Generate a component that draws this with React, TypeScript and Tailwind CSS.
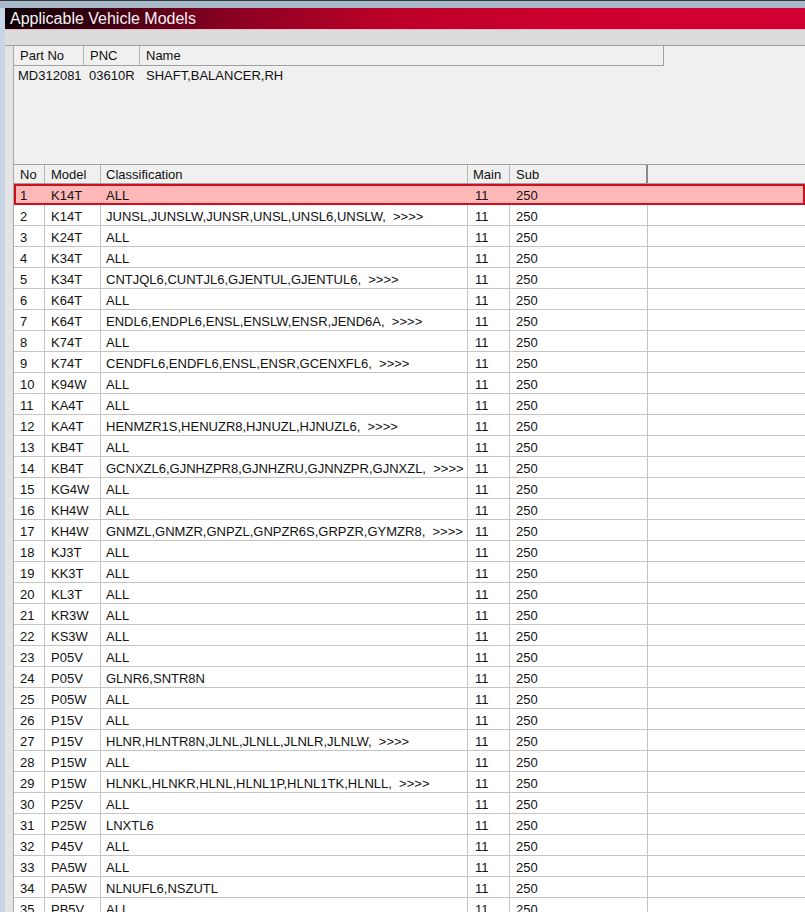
import React from "react";

type Row = { no: number; model: string; cls: string };

const rows: Row[] = [
  { no: 1, model: "K14T", cls: "ALL" },
  { no: 2, model: "K14T", cls: "JUNSL,JUNSLW,JUNSR,UNSL,UNSL6,UNSLW,  >>>>" },
  { no: 3, model: "K24T", cls: "ALL" },
  { no: 4, model: "K34T", cls: "ALL" },
  { no: 5, model: "K34T", cls: "CNTJQL6,CUNTJL6,GJENTUL,GJENTUL6,  >>>>" },
  { no: 6, model: "K64T", cls: "ALL" },
  { no: 7, model: "K64T", cls: "ENDL6,ENDPL6,ENSL,ENSLW,ENSR,JEND6A,  >>>>" },
  { no: 8, model: "K74T", cls: "ALL" },
  { no: 9, model: "K74T", cls: "CENDFL6,ENDFL6,ENSL,ENSR,GCENXFL6,  >>>>" },
  { no: 10, model: "K94W", cls: "ALL" },
  { no: 11, model: "KA4T", cls: "ALL" },
  { no: 12, model: "KA4T", cls: "HENMZR1S,HENUZR8,HJNUZL,HJNUZL6,  >>>>" },
  { no: 13, model: "KB4T", cls: "ALL" },
  { no: 14, model: "KB4T", cls: "GCNXZL6,GJNHZPR8,GJNHZRU,GJNNZPR,GJNXZL,  >>>>" },
  { no: 15, model: "KG4W", cls: "ALL" },
  { no: 16, model: "KH4W", cls: "ALL" },
  { no: 17, model: "KH4W", cls: "GNMZL,GNMZR,GNPZL,GNPZR6S,GRPZR,GYMZR8,  >>>>" },
  { no: 18, model: "KJ3T", cls: "ALL" },
  { no: 19, model: "KK3T", cls: "ALL" },
  { no: 20, model: "KL3T", cls: "ALL" },
  { no: 21, model: "KR3W", cls: "ALL" },
  { no: 22, model: "KS3W", cls: "ALL" },
  { no: 23, model: "P05V", cls: "ALL" },
  { no: 24, model: "P05V", cls: "GLNR6,SNTR8N" },
  { no: 25, model: "P05W", cls: "ALL" },
  { no: 26, model: "P15V", cls: "ALL" },
  { no: 27, model: "P15V", cls: "HLNR,HLNTR8N,JLNL,JLNLL,JLNLR,JLNLW,  >>>>" },
  { no: 28, model: "P15W", cls: "ALL" },
  { no: 29, model: "P15W", cls: "HLNKL,HLNKR,HLNL,HLNL1P,HLNL1TK,HLNLL,  >>>>" },
  { no: 30, model: "P25V", cls: "ALL" },
  { no: 31, model: "P25W", cls: "LNXTL6" },
  { no: 32, model: "P45V", cls: "ALL" },
  { no: 33, model: "PA5W", cls: "ALL" },
  { no: 34, model: "PA5W", cls: "NLNUFL6,NSZUTL" },
  { no: 35, model: "PB5V", cls: "ALL" },
];

const HeadCell = ({ w, pl, children }: { w: string; pl: string; children?: React.ReactNode }) => (
  <div className={`${w} ${pl} h-full shrink-0 border-r border-[#b4b4b4] pt-[1px] leading-[18px]`}>
    {children}
  </div>
);

export default function App() {
  return (
    <div
      className="flex h-[912px] w-[805px] flex-col overflow-hidden bg-[#f0f0f0] text-[13px] text-[#111]"
      style={{ fontFamily: '"Liberation Sans", Arial, sans-serif' }}
    >
      {/* window frame top */}
      <div className="h-px bg-[#2f3b3b]" />
      <div className="h-[7px] bg-[#a8b8c9]" />

      <div className="flex min-h-0 flex-1">
        <div className="w-[5px] shrink-0 bg-[#c7d6e6]" />

        <div className="flex min-w-0 flex-1 flex-col">
          {/* title bar */}
          <div className="h-[21px] shrink-0 bg-[linear-gradient(90deg,#0c0006_0%,#3a0012_12%,#8a0022_28%,#bc0028_48%,#cd0030_70%,#d20032_100%)] pl-[5px] text-[16px] leading-[21px] text-[#f4f4f4]">
            Applicable Vehicle Models
          </div>
          <div className="h-px bg-[#f3b6c4]" />
          <div className="h-[16px] shrink-0 border-b border-[#a0a0a0] bg-[#dcdcdc]" />

          <div className="flex min-h-0 flex-1">
            <div className="w-[9px] shrink-0 border-r border-[#a8a8a8] bg-[#e4e4e4]" />

            <div className="flex min-w-0 flex-1 flex-col">
              {/* part info */}
              <div className="h-[118px] shrink-0">
                <div className="flex h-[20px] w-[650px] border-b border-r border-[#a0a0a0] bg-[#f0f0f0]">
                  <HeadCell w="w-[70px]" pl="pl-[6px]">Part No</HeadCell>
                  <HeadCell w="w-[56px]" pl="pl-[6px]">PNC</HeadCell>
                  <div className="pl-[6px] pt-[1px] leading-[18px]">Name</div>
                </div>
                <div className="flex h-[20px] leading-[20px]">
                  <div className="w-[70px] pl-[4px]">MD312081</div>
                  <div className="w-[56px] pl-[5px]">03610R</div>
                  <div className="pl-[6px]">SHAFT,BALANCER,RH</div>
                </div>
              </div>

              {/* models table */}
              <div className="flex h-[20px] shrink-0 border-y border-[#a0a0a0] bg-[#f0f0f0]">
                <HeadCell w="w-[31px]" pl="pl-[6px]">No</HeadCell>
                <HeadCell w="w-[56px]" pl="pl-[6px]">Model</HeadCell>
                <HeadCell w="w-[367px]" pl="pl-[5px]">Classification</HeadCell>
                <HeadCell w="w-[42px]" pl="pl-[5px]">Main</HeadCell>
                <div className="h-full w-[138px] shrink-0 border-r-2 border-[#888] pl-[6px] pt-[1px] leading-[18px]">Sub</div>
                <div className="flex-1" />
              </div>

              <div className="bg-white">
                {rows.map((r) =>
                  r.no === 1 ? (
                    <div
                      key={r.no}
                      className="flex h-[21px] border-2 border-[#d0101c] bg-[#ffb8b8] pt-[2px] leading-[15px]"
                    >
                      <div className="w-[29px] shrink-0 pl-[4px]">{r.no}</div>
                      <div className="w-[56px] shrink-0 pl-[6px]">{r.model}</div>
                      <div className="w-[367px] shrink-0 pl-[5px]">{r.cls}</div>
                      <div className="w-[42px] shrink-0 pl-[7px]">11</div>
                      <div className="w-[138px] shrink-0 pl-[6px]">250</div>
                    </div>
                  ) : (
                    <div key={r.no} className="flex h-[21px] border-b border-[#c4c4c4] leading-[18px]">
                      <div className="w-[31px] shrink-0 border-r border-[#c4c4c4] pl-[6px] pt-[3px]">{r.no}</div>
                      <div className="w-[56px] shrink-0 border-r border-[#c4c4c4] pl-[6px] pt-[3px]">{r.model}</div>
                      <div className="w-[367px] shrink-0 whitespace-pre border-r border-[#c4c4c4] pl-[5px] pt-[3px]">{r.cls}</div>
                      <div className="w-[42px] shrink-0 border-r border-[#c4c4c4] pl-[7px] pt-[3px]">11</div>
                      <div className="w-[138px] shrink-0 border-r border-[#c4c4c4] pl-[6px] pt-[3px]">250</div>
                      <div className="flex-1" />
                    </div>
                  )
                )}
              </div>
            </div>
          </div>
        </div>
      </div>
    </div>
  );
}
